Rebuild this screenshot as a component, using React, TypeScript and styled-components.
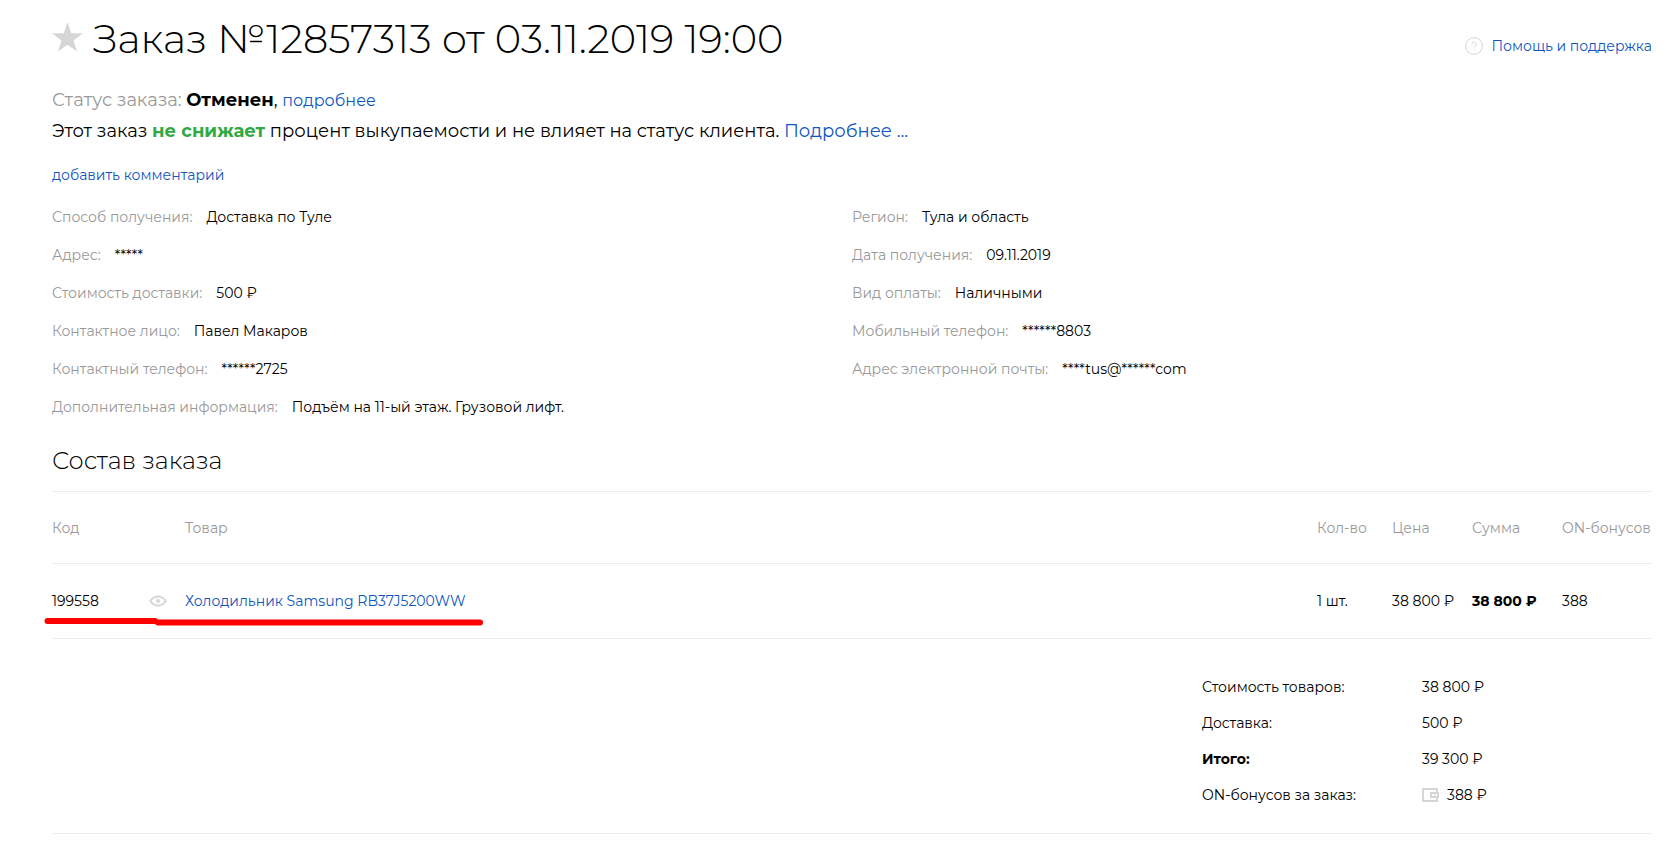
import React from "react";
import styled, { createGlobalStyle } from "styled-components";

const Global = createGlobalStyle`
  *, *::before, *::after { box-sizing: border-box; }
  body {
    margin: 0;
    background: #fff;
    color: #000;
    font-family: Montserrat, Inter, "Noto Sans", sans-serif;
    font-size: 14px;
    line-height: 20px;
  }
`;

const Page = styled.main`
  padding: 15px 14px 18px 52px;
`;

const Header = styled.header`
  display: flex;
  align-items: center;
  justify-content: space-between;
  gap: 24px;
  margin-bottom: 22px;
`;

const TitleGroup = styled.div`
  display: flex;
  align-items: center;
  gap: 10px;
`;

const StarButton = styled.button`
  display: flex;
  padding: 0 0 4px;
  border: 0;
  background: none;
  cursor: pointer;
`;

const Title = styled.h1`
  margin: 0;
  font-size: 40px;
  font-weight: 300;
  line-height: 48px;
`;

const Link = styled.a<{ $size?: number }>`
  color: #0f56bd;
  text-decoration: none;
  font-size: ${(p) => (p.$size ? `${p.$size}px` : "inherit")};
`;

const HelpLink = styled(Link)`
  display: flex;
  align-items: center;
  gap: 8px;
  margin-top: 14px;
`;

const Status = styled.p`
  margin: 0;
  font-size: 18px;
  line-height: 30px;
`;

const Muted = styled.span`
  color: #999;
`;

const Strong = styled.strong<{ $tone?: string }>`
  font-weight: 700;
  color: ${(p) => p.$tone ?? "inherit"};
`;

const CommentLine = styled.p`
  margin: 19px 0 22px;
`;

const Details = styled.div`
  display: grid;
  grid-template-columns: 1fr 1fr;
`;

const DetailList = styled.dl`
  display: flex;
  flex-direction: column;
  gap: 18px;
  margin: 0;
`;

const Detail = styled.div`
  display: flex;
  gap: 14px;
`;

const Term = styled.dt`
  color: #999;
`;

const Value = styled.dd`
  margin: 0;
`;

const SectionTitle = styled.h2`
  margin: 28px 0 14px;
  font-size: 24px;
  font-weight: 300;
  line-height: 32px;
`;

const Table = styled.table`
  width: 100%;
  table-layout: fixed;
  border-collapse: collapse;
  border-top: 1px solid #ececec;
`;

const Col = styled.col<{ $w?: number }>`
  width: ${(p) => (p.$w ? `${p.$w}px` : "auto")};
`;

const Row = styled.tr<{ $h: number }>`
  height: ${(p) => p.$h}px;
  border-bottom: 1px solid #ececec;
`;

const Th = styled.th`
  padding: 0;
  color: #999;
  font-weight: 400;
  text-align: left;
  white-space: nowrap;
`;

const Td = styled.td<{ $bold?: boolean }>`
  position: relative;
  padding: 0;
  font-weight: ${(p) => (p.$bold ? 700 : 400)};
  white-space: nowrap;
`;

const CodeCell = styled.div`
  display: flex;
  align-items: center;
  justify-content: space-between;
  padding-right: 18px;
`;

const Marker = styled.svg`
  position: absolute;
  left: -8px;
  top: 52px;
  pointer-events: none;
`;

const Summary = styled.section`
  display: flex;
  justify-content: flex-end;
  padding: 38px 0 28px;
  border-bottom: 1px solid #ececec;
`;

const Totals = styled.dl`
  display: grid;
  grid-template-columns: 220px 230px;
  row-gap: 16px;
  margin: 0;
`;

const TotalLabel = styled.dt<{ $bold?: boolean }>`
  font-weight: ${(p) => (p.$bold ? 700 : 400)};
`;

const TotalValue = styled.dd`
  display: flex;
  align-items: center;
  gap: 8px;
  margin: 0;
`;

const left: [string, string][] = [
  ["Способ получения:", "Доставка по Туле"],
  ["Адрес:", "*****"],
  ["Стоимость доставки:", "500 ₽"],
  ["Контактное лицо:", "Павел Макаров"],
  ["Контактный телефон:", "******2725"],
  ["Дополнительная информация:", "Подъём на 11-ый этаж. Грузовой лифт."],
];

const right: [string, string][] = [
  ["Регион:", "Тула и область"],
  ["Дата получения:", "09.11.2019"],
  ["Вид оплаты:", "Наличными"],
  ["Мобильный телефон:", "******8803"],
  ["Адрес электронной почты:", "****tus@******com"],
];

const DetailColumn = ({ items }: { items: [string, string][] }) => (
  <DetailList>
    {items.map(([term, value]) => (
      <Detail key={term}>
        <Term>{term}</Term>
        <Value>{value}</Value>
      </Detail>
    ))}
  </DetailList>
);

export default function App() {
  return (
    <Page>
      <Global />
      <Header>
        <TitleGroup>
          <StarButton type="button" aria-label="В избранное">
            <svg width="31" height="30" viewBox="0 0 31 30">
              <path
                fill="#d6d6d6"
                d="M15.500 0L19.200 11.300L31 11.300L21.500 18.400L25.100 29.600L15.500 22.700L5.900 29.600L9.500 18.400L0 11.300L11.800 11.300Z"
              />
            </svg>
          </StarButton>
          <Title>Заказ №12857313 от 03.11.2019 19:00</Title>
        </TitleGroup>
        <HelpLink href="#help">
          <svg width="18" height="18" viewBox="0 0 18 18" fill="none" stroke="#d6d6d6">
            <circle cx="9" cy="9" r="8.400" />
            <path d="M6.800 7.200a2.200 2 0 1 1 3.300 1.700q-1.100.6-1.100 1.600M9 11.800v1.200" />
          </svg>
          Помощь и поддержка
        </HelpLink>
      </Header>

      <Status>
        <Muted>Статус заказа:</Muted> <Strong>Отменен</Strong>,{" "}
        <Link href="#status" $size={16}>подробнее</Link>
      </Status>
      <Status>
        Этот заказ <Strong $tone="#33a944">не снижает</Strong> процент выкупаемости и не влияет на
        статус клиента. <Link href="#more">Подробнее ...</Link>
      </Status>
      <CommentLine>
        <Link href="#comment">добавить комментарий</Link>
      </CommentLine>

      <Details>
        <DetailColumn items={left} />
        <DetailColumn items={right} />
      </Details>

      <SectionTitle>Состав заказа</SectionTitle>
      <Table>
        <colgroup>
          <Col $w={133} />
          <Col />
          <Col $w={75} />
          <Col $w={80} />
          <Col $w={90} />
          <Col $w={90} />
        </colgroup>
        <thead>
          <Row $h={72}>
            <Th>Код</Th>
            <Th>Товар</Th>
            <Th>Кол-во</Th>
            <Th>Цена</Th>
            <Th>Сумма</Th>
            <Th>ON-бонусов</Th>
          </Row>
        </thead>
        <tbody>
          <Row $h={75}>
            <Td>
              <CodeCell>
                199558
                <svg width="18" height="12" viewBox="0 0 18 12" fill="none" stroke="#d6d6d6">
                  <path strokeWidth="2" d="M1.200 6Q4.500 1.400 9 1.400T16.800 6Q13.500 10.600 9 10.600T1.200 6Z" />
                  <circle cx="9" cy="6" r="2" fill="#d6d6d6" stroke="none" />
                </svg>
              </CodeCell>
              <Marker width="440" height="12" viewBox="0 0 440 12" fill="none" aria-hidden="true">
                <path stroke="#f00" strokeWidth="6" strokeLinecap="round" d="M3.500 5H111M114 6.500H436" />
              </Marker>
            </Td>
            <Td>
              <Link href="#product">Холодильник Samsung RB37J5200WW</Link>
            </Td>
            <Td>1 шт.</Td>
            <Td>38 800 ₽</Td>
            <Td $bold>38 800 ₽</Td>
            <Td>388</Td>
          </Row>
        </tbody>
      </Table>

      <Summary>
        <Totals>
          <TotalLabel>Стоимость товаров:</TotalLabel>
          <TotalValue>38 800 ₽</TotalValue>
          <TotalLabel>Доставка:</TotalLabel>
          <TotalValue>500 ₽</TotalValue>
          <TotalLabel $bold>Итого:</TotalLabel>
          <TotalValue>39 300 ₽</TotalValue>
          <TotalLabel>ON-бонусов за заказ:</TotalLabel>
          <TotalValue>
            <svg width="17" height="14" viewBox="0 0 17 14" fill="#d6d6d6">
              <path
                fillRule="evenodd"
                d="M0 0H16V4H17V10H16V14H0ZM2 2V12H14V10H8V4H14V2ZM10 6V8H12V6ZM13 6V8H15V6Z"
              />
            </svg>
            388 ₽
          </TotalValue>
        </Totals>
      </Summary>
    </Page>
  );
}
